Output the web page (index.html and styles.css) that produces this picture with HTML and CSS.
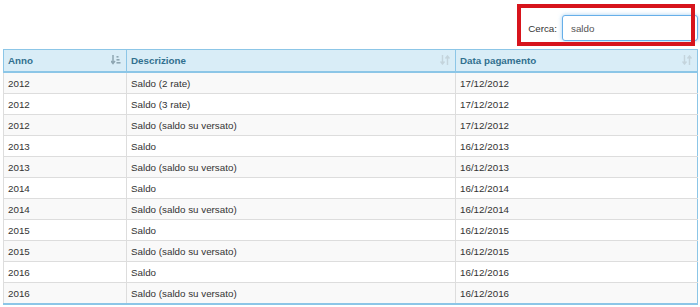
FILE: index.html
```html
<!DOCTYPE html>
<html lang="it">
<head>
    <meta charset="UTF-8">
    <meta name="viewport" content="width=device-width, initial-scale=1.0">
    <title>Pagamenti</title>
    <link rel="stylesheet" href="styles.css">
</head>
<body>
    <div class="filter-bar">
        <label for="search">Cerca:</label>
        <input type="text" id="search" value="saldo">
        <div class="highlight"></div>
    </div>

    <table class="data-table">
        <thead>
            <tr>
                <th class="col-anno">Anno
                    <svg class="sort-icon active" width="10" height="10" viewBox="0 0 10 10">
                        <path d="M2 0v8M0 6l2 2.5 2-2.5" fill="none" stroke="currentColor" stroke-width="1.5"/>
                        <rect x="5.5" y="1" width="2" height="1.6" fill="currentColor"/>
                        <rect x="5.5" y="4" width="3" height="1.6" fill="currentColor"/>
                        <rect x="5.5" y="7" width="4" height="1.6" fill="currentColor"/>
                    </svg>
                </th>
                <th class="col-desc">Descrizione
                    <svg class="sort-icon" width="10" height="10" viewBox="0 0 10 10">
                        <path d="M2.5 0v9M0.5 6.5l2 2.5 2-2.5M7.5 10v-9M5.5 3.5l2-2.5 2 2.5" fill="none" stroke="currentColor" stroke-width="1.4"/>
                    </svg>
                </th>
                <th class="col-data">Data pagamento
                    <svg class="sort-icon" width="10" height="10" viewBox="0 0 10 10">
                        <path d="M2.5 0v9M0.5 6.5l2 2.5 2-2.5M7.5 10v-9M5.5 3.5l2-2.5 2 2.5" fill="none" stroke="currentColor" stroke-width="1.4"/>
                    </svg>
                </th>
            </tr>
        </thead>
        <tbody>
            <tr><td>2012</td><td>Saldo (2 rate)</td><td>17/12/2012</td></tr>
            <tr><td>2012</td><td>Saldo (3 rate)</td><td>17/12/2012</td></tr>
            <tr><td>2012</td><td>Saldo (saldo su versato)</td><td>17/12/2012</td></tr>
            <tr><td>2013</td><td>Saldo</td><td>16/12/2013</td></tr>
            <tr><td>2013</td><td>Saldo (saldo su versato)</td><td>16/12/2013</td></tr>
            <tr><td>2014</td><td>Saldo</td><td>16/12/2014</td></tr>
            <tr><td>2014</td><td>Saldo (saldo su versato)</td><td>16/12/2014</td></tr>
            <tr><td>2015</td><td>Saldo</td><td>16/12/2015</td></tr>
            <tr><td>2015</td><td>Saldo (saldo su versato)</td><td>16/12/2015</td></tr>
            <tr><td>2016</td><td>Saldo</td><td>16/12/2016</td></tr>
            <tr><td>2016</td><td>Saldo (saldo su versato)</td><td>16/12/2016</td></tr>
        </tbody>
    </table>
</body>
</html>
```

FILE: styles.css
```css
body {
    font-family: 'Liberation Sans', Arial, Helvetica, sans-serif;
    font-size: 9.8px;
    color: #333;
    background: #fff;
    margin: 0;
}
.filter-bar {
    position: relative;
    display: flex;
    align-items: center;
    justify-content: flex-end;
    gap: 5px;
    padding: 15px 2px 8px 0;
}
.filter-bar label {
    color: #333;
}
.filter-bar input {
    width: 136px;
    height: 26px;
    box-sizing: border-box;
    padding: 0 8px;
    border: 1px solid #66afe9;
    border-radius: 3px;
    box-shadow: 0 0 4px rgba(102,175,233,0.6);
    font-family: inherit;
    font-size: 9.8px;
    color: #555;
    outline: none;
}
.highlight {
    position: absolute;
    left: 517px;
    top: 4px;
    width: 178px;
    height: 42px;
    box-sizing: border-box;
    border: 4px solid #d7141c;
    pointer-events: none;
}
.data-table {
    margin-left: 3px;
    width: 695px;
    border-collapse: collapse;
    border-bottom: 2px solid #8cc6e7;
    border-right: 1px solid #8cc6e7;
}
.data-table th {
    position: relative;
    height: 21px;
    padding: 0 4px;
    text-align: left;
    font-weight: bold;
    color: #31708f;
    background: #d9edf7;
    border: 1px solid #8cc6e7;
    border-bottom-width: 2px;
}
.col-anno { width: 114px; }
.col-desc { width: 320px; }
.sort-icon {
    position: absolute;
    right: 5px;
    top: 5px;
    color: #c4d4dc;
}
.sort-icon.active {
    color: #8ea6b2;
}
.data-table td {
    height: 20px;
    padding: 0 4px;
    border: 1px solid #ddd;
}
.data-table td:last-child {
    border-right-color: #8cc6e7;
}
.data-table tbody tr:nth-child(odd) {
    background: #f9f9f9;
}
```
